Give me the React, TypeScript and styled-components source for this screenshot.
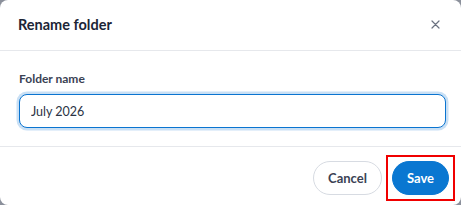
import styled, { createGlobalStyle } from "styled-components";

const GlobalStyle = createGlobalStyle`
    html, body {
        margin: 0;
        padding: 0;
        background: #8b909b;
        font-family: Lato, "Noto Sans", "Liberation Sans", sans-serif;
    }
    * {
        box-sizing: border-box;
    }
`

export default function App() {
    return (
        <>
            <GlobalStyle />
            <Dialog>
                <Header>
                    <Title>Rename folder</Title>
                    <CloseButton aria-label="Close">
                        <svg width="9" height="9" viewBox="0 0 9 9">
                            <path d="M1 1L8 8M8 1L1 8" stroke="#6b7280" strokeWidth="1.2" strokeLinecap="round" />
                        </svg>
                    </CloseButton>
                </Header>
                <Body>
                    <Label htmlFor="folder">Folder name</Label>
                    <Input id="folder" defaultValue="July 2026" />
                </Body>
                <Footer>
                    <Button>Cancel</Button>
                    <Highlight>
                        <Button primary>Save</Button>
                    </Highlight>
                </Footer>
            </Dialog>
        </>
    )
}

const Dialog = styled.div`
    width: 461px;
    height: 205px;
    background: #ffffff;
    border-radius: 8px;
    display: flex;
    flex-direction: column;
    overflow: hidden;
`

const Header = styled.div`
    height: 51px;
    display: flex;
    align-items: center;
    justify-content: space-between;
    padding: 0 19px 2px 18px;
    border-bottom: 1px solid #e6e8ec;
`

const Title = styled.h2`
    margin: 0;
    font-size: 14.5px;
    font-weight: 700;
    color: #1c2536;
`

const CloseButton = styled.button`
    background: none;
    border: none;
    padding: 0;
    width: 14px;
    height: 14px;
    display: flex;
    align-items: center;
    justify-content: center;
    cursor: pointer;
`

const Body = styled.div`
    padding: 20px 15px 18px 19px;
    display: flex;
    flex-direction: column;
    gap: 8px;
    border-bottom: 1px solid #e6e8ec;
`

const Label = styled.label`
    font-size: 12px;
    font-weight: 700;
    color: #3a4254;
    line-height: 15px;
`

const Input = styled.input`
    height: 34px;
    width: 100%;
    border: 1px solid #0a74d0;
    border-radius: 8px;
    box-shadow: 0 0 0 2.5px rgba(10, 116, 208, 0.22);
    padding: 0 11px;
    font-family: inherit;
    font-size: 12.5px;
    color: #2b3344;
    outline: none;
`

const Footer = styled.div`
    flex: 1;
    display: flex;
    align-items: flex-start;
    justify-content: flex-end;
    gap: 4px;
    padding: 8px 6px 0 0;
`

const Highlight = styled.span`
    display: flex;
    padding: 4px;
    border: 2px solid #f00000;
`

const Button = styled.button<{ primary?: boolean }>`
    height: 34px;
    margin-top: ${p => (p.primary ? "0" : "6px")};
    padding: 0 14px;
    border-radius: 17px;
    font-family: inherit;
    font-size: 13px;
    font-weight: 700;
    cursor: pointer;
    background: ${p => (p.primary ? "#0a77d1" : "#ffffff")};
    color: ${p => (p.primary ? "#ffffff" : "#3a4254")};
    border: 1px solid ${p => (p.primary ? "#0a77d1" : "#d7dbe2")};
`
